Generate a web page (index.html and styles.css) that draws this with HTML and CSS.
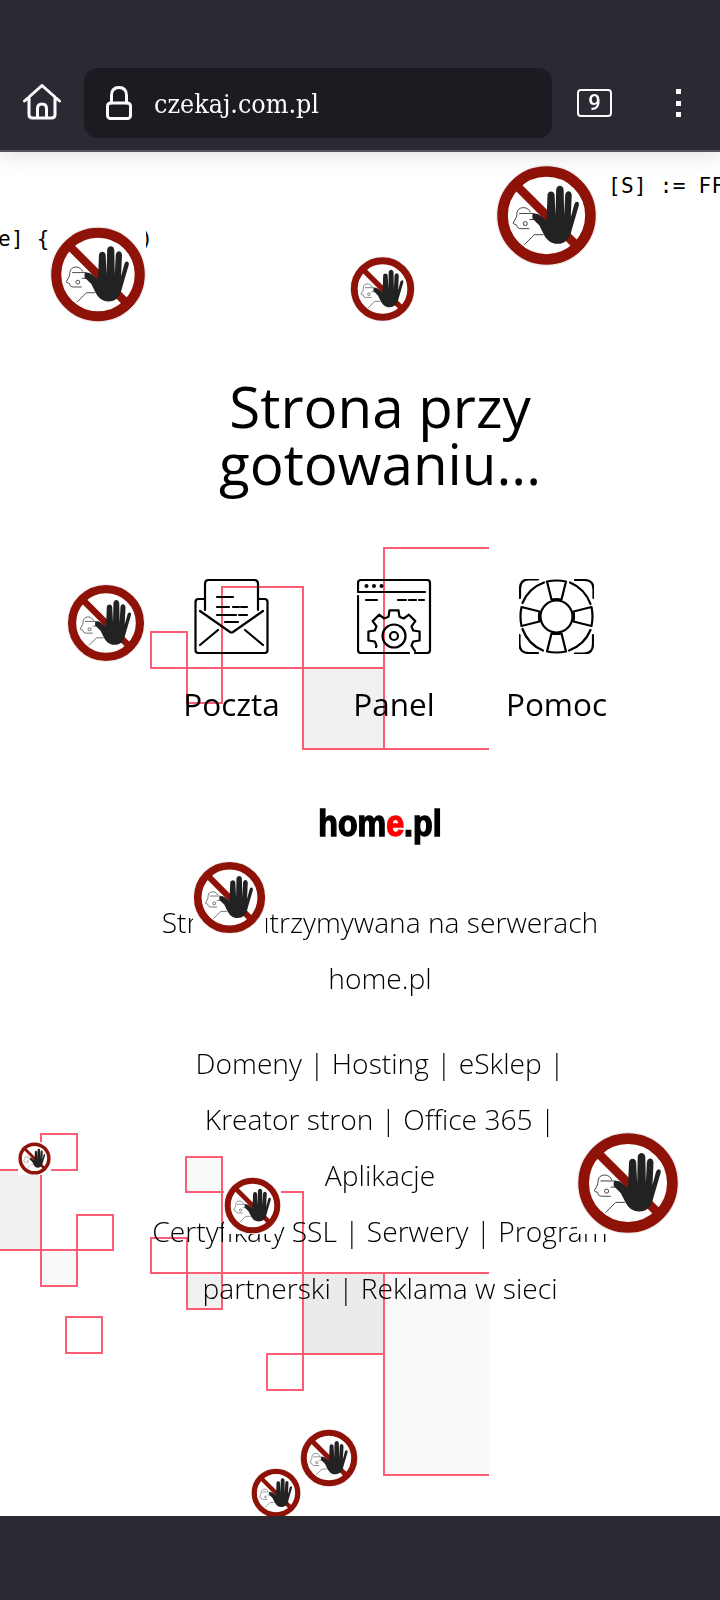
FILE: index.html
```html
<!DOCTYPE html>
<html lang="pl">
<head>
<meta charset="utf-8">
<title>czekaj.com.pl</title>
<link rel="stylesheet" href="styles.css">
</head>
<body>
<svg class="defs" width="0" height="0" aria-hidden="true">
  <symbol id="stop" viewBox="0 0 100 100">
    <rect width="100" height="100" fill="#fff"/>
    <circle cx="50" cy="50" r="49.600" fill="#fff" stroke="#ddd" stroke-width=".7"/>
    <path d="M16 16L84 84" stroke="#8f1208" stroke-width="8.500"/>
    <g fill="none" stroke="#333" stroke-width=".9">
      <path d="M34 47C32 41 24 41 21.500 45C20 48 21 50 20 52L17 57.500C17 59 20 58.500 20.500 59.500C20.500 62 22 63 25 63H33"/>
      <path d="M23 48H38"/>
      <circle cx="29" cy="58" r="2"/>
      <path d="M28 79L38 69H47M33 54H44"/>
    </g>
    <path fill="#222" d="M36 49C38 47 41 48 44 50L50 55L51 30C51 25 58 25 58 30L59 50L59.500 25C59.500 19 67 19 67 25L67.500 50L68.500 30C69 24 75 25 75 30L74 52L77.500 39C79 35 83 36 82 40L75 64C73 74 68 78 61 78C54 78 50 74 47 68L43 60L36 53Z"/>
    <circle cx="50" cy="50" r="43.500" fill="none" stroke="#8f1208" stroke-width="10.500"/>
  </symbol>
  <g id="buoy-band"><path d="M28 2.500Q37.500 .5 47 2.500L42.500 20.500Q37.500 19.500 32.500 20.500Z"/></g>
  <g id="buoy-arc"><path d="M25 3.500A37 37 0 0 0 3.500 24"/><path d="M19 .5H10Q1 .5 1 10V19"/></g>
</svg>

<div class="page">
  <header class="toolbar">
    <svg class="home-icon" viewBox="0 0 38 36" aria-hidden="true">
      <path d="M1.500 17L19 1.500L36.500 17M6 13V30.500Q6 34 9.500 34H28.500Q32 34 32 30.500V13M14.500 34V24.500Q14.500 20 19 20Q23.500 20 23.500 24.500V34"/>
    </svg>
    <div class="address">
      <svg class="lock-icon" viewBox="0 0 26 34" aria-hidden="true">
        <path d="M5.500 17V9.500Q5.500 1.500 13 1.500Q20.500 1.500 20.500 9.500V17"/>
        <rect x="1.500" y="17" width="23" height="15.500" rx="3"/>
      </svg>
      <span class="url">czekaj.com.pl</span>
    </div>
    <div class="tabs">9</div>
    <div class="menu"><i></i><i></i><i></i></div>
  </header>

  <svg class="pattern" viewBox="0 0 720 1600" aria-hidden="true">
    <path class="f1" d="M303 668H384V749H303Z"/>
    <path class="f0" d="M489 548H384V749H489M303 668H222V587H303Z"/>
    <path class="f0" d="M222 668H187V632H151V668H187V703H222Z"/>
    <path class="f0" d="M187 668H303"/>

    <path class="f2" d="M186 1157H222V1192H186Z"/>
    <path class="f0" d="M151 1238H187V1273H151Z"/>
    <path class="f1" d="M187 1273H222V1309H187Z"/>
    <path class="f0" d="M222 1192H303V1273H222Z"/>
    <path class="f3" d="M303 1273H384V1354H303Z"/>
    <path class="f0" d="M267 1354H303V1390H267Z"/>
    <path class="f2" d="M489 1273H384V1475H489"/>

    <path class="f0" d="M41 1134H77V1170H41Z"/>
    <path class="f1" d="M-2 1170H41V1250H-2Z"/>
    <path class="f0" d="M77 1215H113V1250H77Z"/>
    <path class="f2" d="M41 1250H77V1286H41Z"/>
    <path class="f0" d="M66 1317H102V1353H66Z"/>
  </svg>

  <code class="snippet snippet-right">[S] := FFFF</code>
  <code class="snippet snippet-left">e] { start()</code>

  <main class="content">
    <h1 class="title">Strona przy<br>gotowaniu...</h1>
    <nav class="links">
      <a class="link">
        <svg class="link-icon" viewBox="0 0 75 75" aria-hidden="true">
          <path d="M11 31V5Q11 1 15 1H60Q64 1 64 5V31"/>
          <path d="M10 20H4.500Q1.500 20 1.500 23V71Q1.500 74 4.500 74H70.500Q73.500 74 73.500 71V23Q73.500 20 70.500 20H65"/>
          <path d="M6 32L36 53Q37.500 54 39 53L69 32M6 66L24 51M69 66L51 51M23 18H39M23 28H35M39 28H45M47 28H53M23 36H42M45 36H53M31 43H44"/>
        </svg>
        <span class="link-label">Poczta</span>
      </a>
      <a class="link">
        <svg class="link-icon" viewBox="0 0 75 75" aria-hidden="true">
          <path d="M1 17V71Q1 74 4 74H52M58 74H70Q73 74 73 71V4Q73 1 70 1H4Q1 1 1 4V13H68"/>
          <path d="M9 21H20M41 21H49M52 21H59M62 21H67"/>
          <path d="M19 68L19.500 66.700L17.800 62.500L11.400 61.500V52.500L17.800 51.500L19.500 47.300L15.700 42.100L22.100 35.700L27.300 39.500L31.500 37.800L32.500 31.400H41.500L42.500 37.800L46.700 39.500L51.900 35.700L58.300 42.100L54.500 47.300L56.200 51.500L62.600 52.500V61.500L56.200 62.500L54.500 66.700L58 72"/>
          <circle cx="37" cy="57" r="11.500"/>
          <circle cx="37" cy="57" r="4"/>
          <circle class="solid" cx="9.500" cy="7" r="2"/>
          <circle class="solid" cx="17" cy="7" r="2"/>
          <circle class="solid" cx="24.500" cy="7" r="2"/>
        </svg>
        <span class="link-label">Panel</span>
      </a>
      <a class="link">
        <svg class="link-icon" viewBox="0 0 75 75" aria-hidden="true">
          <circle cx="37.500" cy="37.500" r="16"/>
          <use href="#buoy-band"/>
          <use href="#buoy-band" transform="rotate(90 37.500 37.500)"/>
          <use href="#buoy-band" transform="rotate(180 37.500 37.500)"/>
          <use href="#buoy-band" transform="rotate(270 37.500 37.500)"/>
          <use href="#buoy-arc"/>
          <use href="#buoy-arc" transform="rotate(90 37.500 37.500)"/>
          <use href="#buoy-arc" transform="rotate(180 37.500 37.500)"/>
          <use href="#buoy-arc" transform="rotate(270 37.500 37.500)"/>
        </svg>
        <span class="link-label">Pomoc</span>
      </a>
    </nav>
    <div class="logo">hom<span class="logo-e">e</span>.pl</div>
    <p class="text">Strona utrzymywana na serwerach home.pl</p>
    <p class="text">Domeny | Hosting | eSklep | Kreator stron | Office 365 | Aplikacje<br>Certyfikaty SSL | Serwery | Program partnerski | Reklama w sieci</p>
  </main>

  <svg class="sign sign-1" aria-hidden="true"><use href="#stop"/></svg>
  <svg class="sign sign-2" aria-hidden="true"><use href="#stop"/></svg>
  <svg class="sign sign-3" aria-hidden="true"><use href="#stop"/></svg>
  <svg class="sign sign-4" aria-hidden="true"><use href="#stop"/></svg>
  <svg class="sign sign-5" aria-hidden="true"><use href="#stop"/></svg>
  <svg class="sign sign-6" aria-hidden="true"><use href="#stop"/></svg>
  <svg class="sign sign-7" aria-hidden="true"><use href="#stop"/></svg>
  <svg class="sign sign-8" aria-hidden="true"><use href="#stop"/></svg>
  <svg class="sign sign-9" aria-hidden="true"><use href="#stop"/></svg>
  <svg class="sign sign-10" aria-hidden="true"><use href="#stop"/></svg>

  <footer class="bottom-bar"></footer>
</div>
</body>
</html>
```

FILE: styles.css
```css
* { box-sizing: border-box; }
html, body { margin: 0; padding: 0; background: #fff; }
.defs { position: absolute; }
.page {
  position: relative;
  width: 720px;
  height: 1600px;
  overflow: hidden;
  display: flex;
  flex-direction: column;
  font-family: "Open Sans", sans-serif;
  color: #000;
}

/* browser chrome */
.toolbar {
  position: relative;
  z-index: 3;
  flex: none;
  height: 152px;
  padding: 68px 0 12px 23px;
  display: flex;
  align-items: flex-start;
  background: #2b2a33;
  border-bottom: 2px solid #52525e;
  box-shadow: 0 3px 22px rgba(0, 0, 0, .13);
}
.home-icon { width: 38px; height: 36px; margin-top: 16px; flex: none; }
.home-icon path, .lock-icon path, .lock-icon rect {
  fill: none;
  stroke: #fbfbfe;
  stroke-width: 3;
  stroke-linejoin: round;
  stroke-linecap: round;
}
.address {
  width: 468px;
  height: 70px;
  margin-left: 23px;
  padding-left: 22px;
  display: flex;
  align-items: center;
  background: #1c1b22;
  border-radius: 14px;
}
.lock-icon { width: 26px; height: 34px; flex: none; }
.url {
  margin-left: 22px;
  font: 26.600px "DejaVu Serif Condensed", "DejaVu Serif", serif;
  color: #fbfbfe;
}
.tabs {
  width: 35px;
  height: 28px;
  margin: 21px 0 0 25px;
  border: 2.500px solid #fbfbfe;
  border-radius: 4px;
  font: 500 22px/23px Roboto, sans-serif;
  text-align: center;
  color: #fbfbfe;
}
.menu {
  margin: 21px 0 0 64px;
  width: 5px;
  display: flex;
  flex-direction: column;
  gap: 6.500px;
}
.menu i { display: block; width: 5px; height: 5px; background: #fbfbfe; }

.bottom-bar {
  position: relative;
  z-index: 3;
  flex: none;
  height: 84px;
  background: #2b2a33;
}

/* decorative background */
.pattern {
  position: absolute;
  left: 0;
  top: 0;
  width: 720px;
  height: 1600px;
}
.pattern path { stroke: #fb5d74; stroke-width: 2; fill: none; }
.pattern .f1 { fill: #f1f1f1; }
.pattern .f2 { fill: #f9f9f9; }
.pattern .f3 { fill: #ebebeb; }

.snippet {
  position: absolute;
  font: 21px/26px "DejaVu Sans Mono", monospace;
  letter-spacing: .3px;
  white-space: pre;
}
.snippet-right { left: 608px; top: 173px; }
.snippet-left { left: -2px; top: 226px; }

/* content */
.content {
  position: relative;
  flex: 1;
  padding: 226px 0 0;
  display: flex;
  flex-direction: column;
  align-items: center;
  width: 760px;
  will-change: transform;
}
.title {
  margin: 0;
  font-size: 56.500px;
  font-weight: 400;
  line-height: 57px;
  text-align: center;
}
.links {
  margin: 86.500px 0 0 28px;
  display: flex;
}
.link {
  width: 162.500px;
  display: flex;
  flex-direction: column;
  align-items: center;
}
.link-icon {
  width: 75px;
  height: 75px;
  fill: none;
  stroke: #000;
  stroke-width: 2.200;
  stroke-linecap: round;
  stroke-linejoin: round;
}
.link-icon .solid { fill: #000; stroke: none; }
.link-label {
  margin-top: 28.500px;
  font-size: 31.500px;
  line-height: 44px;
}
.logo {
  margin-top: 77px;
  font: 700 37px/42px "Liberation Sans", sans-serif;
  -webkit-text-stroke: 1.500px #000;
  transform: scaleX(.87);
}
.logo-e { color: #f00; -webkit-text-stroke-color: #f00; }
.text {
  width: 462px;
  margin: 49px 0 0;
  font-size: 28.200px;
  font-weight: 300;
  line-height: 56.300px;
  text-align: center;
}
.text + .text { margin-top: 28px; }

/* warning signs, scattered over the page */
.sign { position: absolute; z-index: 2; }
.sign-1 { left: 50px; top: 226px; width: 96px; height: 97px; }
.sign-2 { left: 350px; top: 256px; width: 65px; height: 66px; }
.sign-3 { left: 496px; top: 164px; width: 101px; height: 103px; }
.sign-4 { left: 67px; top: 584px; width: 78px; height: 78px; }
.sign-5 { left: 193px; top: 861px; width: 73px; height: 73px; }
.sign-6 { left: 18px; top: 1142px; width: 33px; height: 33px; }
.sign-7 { left: 224px; top: 1177px; width: 57px; height: 57px; }
.sign-8 { left: 577px; top: 1131px; width: 102px; height: 104px; }
.sign-9 { left: 300px; top: 1429px; width: 58px; height: 58px; }
.sign-10 { left: 251px; top: 1468px; width: 50px; height: 50px; }
```
